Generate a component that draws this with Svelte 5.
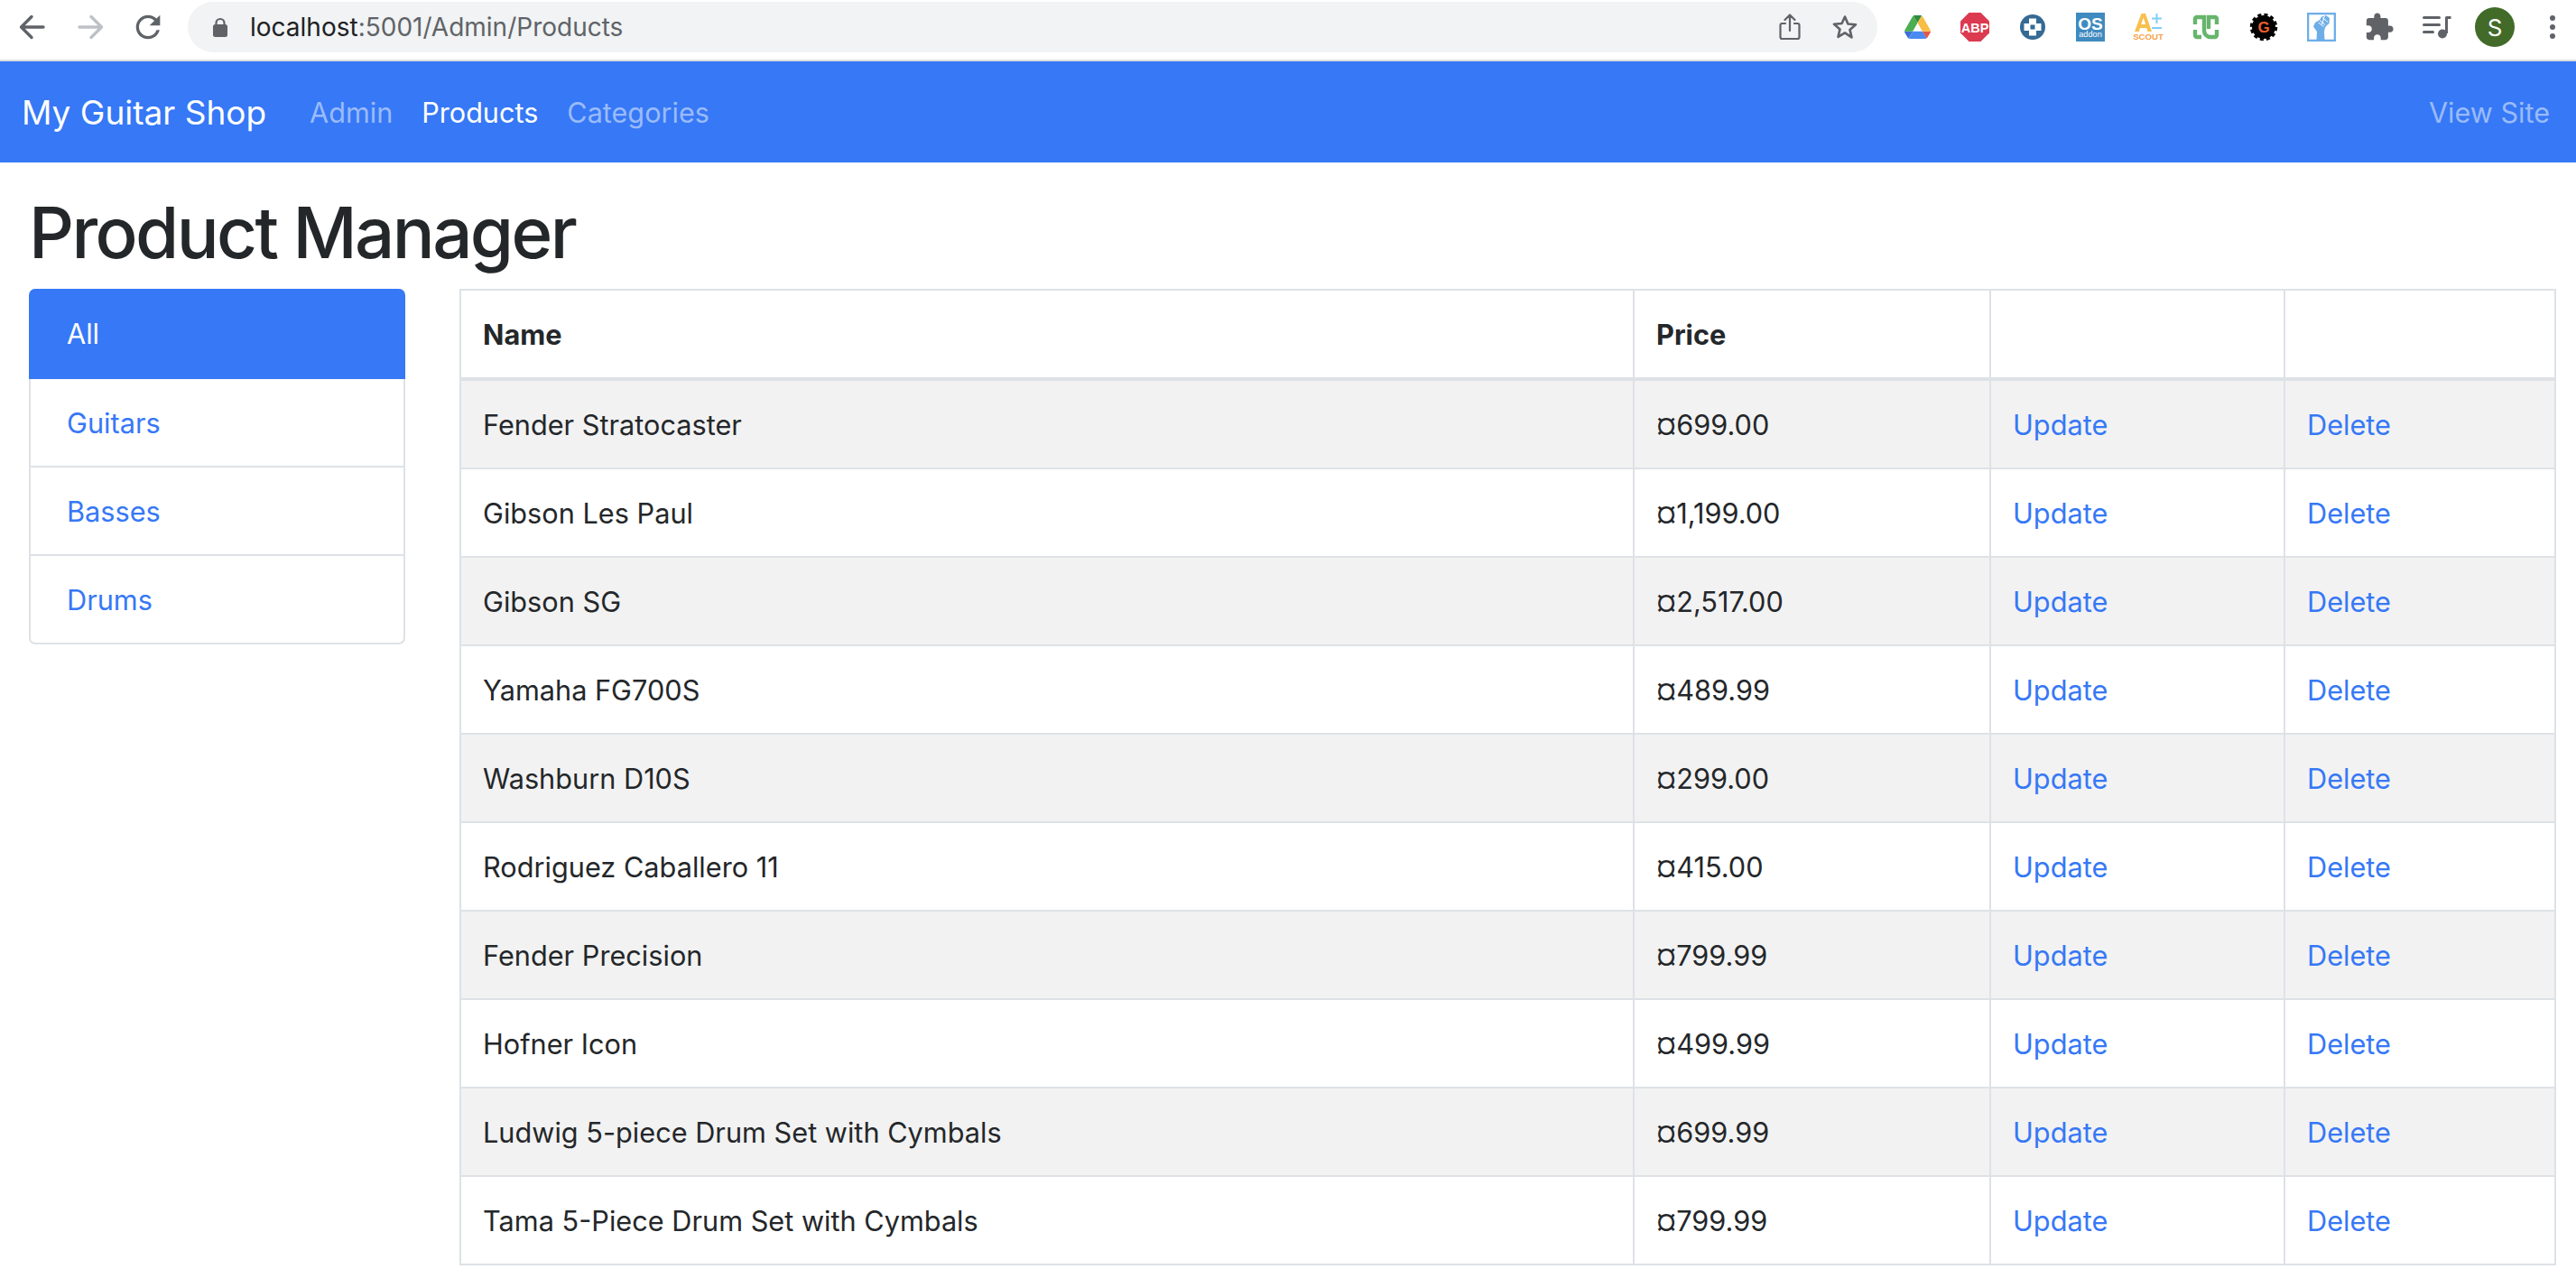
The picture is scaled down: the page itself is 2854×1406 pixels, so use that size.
<script>
  const products = [
    ["Fender Stratocaster", "¤699.00"],
    ["Gibson Les Paul", "¤1,199.00"],
    ["Gibson SG", "¤2,517.00"],
    ["Yamaha FG700S", "¤489.99"],
    ["Washburn D10S", "¤299.00"],
    ["Rodriguez Caballero 11", "¤415.00"],
    ["Fender Precision", "¤799.99"],
    ["Hofner Icon", "¤499.99"],
    ["Ludwig 5-piece Drum Set with Cymbals", "¤699.99"],
    ["Tama 5-Piece Drum Set with Cymbals", "¤799.99"],
  ];
  const categories = ["Guitars", "Basses", "Drums"];
</script>

<div class="page">
  <div class="chrome">
    <span class="slot">
      <svg width="32" height="30" viewBox="0 0 32 30" fill="none" stroke="#5f6368" stroke-width="3.4" stroke-linecap="round" stroke-linejoin="round"><path d="M4 15h24M15 3.500 3.500 15 15 26.500"/></svg>
    </span>
    <span class="slot">
      <svg width="32" height="30" viewBox="0 0 32 30" fill="none" stroke="#bdc1c6" stroke-width="3.4" stroke-linecap="round" stroke-linejoin="round"><path d="M4 15h24M17 3.500 28.500 15 17 26.500"/></svg>
    </span>
    <span class="slot">
      <svg width="40" height="40" viewBox="0 0 24 24" fill="#5f6368"><path d="M17.65 6.350A7.958 7.958 0 0 0 12 4c-4.420 0-7.990 3.580-7.990 8s3.570 8 7.990 8c3.730 0 6.840-2.550 7.730-6h-2.080A5.990 5.990 0 0 1 12 18c-3.310 0-6-2.690-6-6s2.690-6 6-6c1.660 0 3.140.690 4.220 1.780L13 11h7V4l-2.350 2.350z"/></svg>
    </span>

    <div class="omnibox">
      <svg class="lock" width="16" height="22" viewBox="0 0 16 22"><path d="M3.500 9V6.500a4.500 4.500 0 0 1 9 0V9" fill="none" stroke="#5f6368" stroke-width="2.200"/><rect y="8" width="16" height="14" rx="2.500" fill="#5f6368"/></svg>
      <span class="url"><b>localhost</b>:5001/Admin/Products</span>
      <svg class="share" width="24" height="30" viewBox="0 0 24 30" fill="none" stroke="#5f6368" stroke-width="2.200" stroke-linecap="round" stroke-linejoin="round"><path d="M7 11H3.500a2 2 0 0 0-2 2v13a2 2 0 0 0 2 2h17a2 2 0 0 0 2-2V13a2 2 0 0 0-2-2H17M12 19V2M6.500 7 12 1.500 17.500 7"/></svg>
      <svg class="star" width="30" height="30" viewBox="0 0 30 30" fill="none" stroke="#5f6368" stroke-width="2.600" stroke-linejoin="round"><path d="M15 3.500l3.400 8 8.600.7-6.500 5.700 2 8.500L15 21.400 7.500 25.900l2-8.500L3 11.700l8.600-.7z"/></svg>
    </div>

    <div class="extensions">
      <span class="slot">
        <svg width="29" height="26" viewBox="0 0 87.300 78">
          <path d="m6.600 66.850 3.850 6.650c.8 1.400 1.950 2.500 3.300 3.300l13.750-23.800h-27.500c0 1.550.4 3.100 1.200 4.500z" fill="#3b6fd8"/>
          <path d="m43.650 25-13.750-23.800c-1.350.8-2.500 1.900-3.300 3.300l-25.400 44a9.060 9.060 0 0 0 -1.200 4.500h27.500z" fill="#4cae50"/>
          <path d="m73.550 76.800c1.350-.8 2.500-1.900 3.300-3.300l1.600-2.750 7.650-13.250c.8-1.400 1.200-2.950 1.200-4.500h-27.502l5.852 11.500z" fill="#e2574a"/>
          <path d="m43.650 25 13.750-23.800c-1.350-.8-2.900-1.200-4.500-1.200h-18.500c-1.600 0-3.150.45-4.500 1.200z" fill="#2f8a3e"/>
          <path d="m59.800 53h-32.300l-13.750 23.800c1.350.8 2.900 1.200 4.500 1.200h50.800c1.600 0 3.150-.45 4.500-1.200z" fill="#4a8af0"/>
          <path d="m73.400 26.500-12.700-22c-.8-1.400-1.950-2.500-3.300-3.300l-13.750 23.800 16.150 28h27.450c0-1.550-.4-3.100-1.200-4.500z" fill="#f8bd45"/>
        </svg>
      </span>
      <span class="slot">
        <svg width="32" height="32" viewBox="0 0 32 32">
          <polygon points="9.500,0 22.500,0 32,9.500 32,22.500 22.500,32 9.500,32 0,22.500 0,9.500" fill="#dc3a50"/>
          <text x="16" y="21.500" text-anchor="middle" class="ico-text abp">ABP</text>
        </svg>
      </span>
      <span class="slot">
        <svg width="30" height="30" viewBox="0 0 30 30">
          <circle cx="15" cy="15" r="14" fill="#356a94"/>
          <path d="M11 5.500h8v5.500h5.500v8H19v5.500h-8V19H5.500v-8H11z" fill="#fff"/>
          <rect x="12.500" y="12.500" width="5" height="5" fill="#356a94"/>
        </svg>
      </span>
      <span class="slot">
        <svg width="32" height="32" viewBox="0 0 32 32">
          <rect width="32" height="32" fill="#3f8bbf"/>
          <text x="16" y="18.700" text-anchor="middle" class="ico-text os">OS</text>
          <text x="16" y="27" text-anchor="middle" class="ico-text addon">addon</text>
        </svg>
      </span>
      <span class="slot">
        <svg width="36" height="30" viewBox="0 0 36 30">
          <path d="M3 20 10.500 0h4.500L22 20h-4.500l-1.200-4H9l-1.200 4z M10.200 12h5l-2.500-7.500z" fill="#f8c04c" fill-rule="evenodd"/>
          <path d="M27.500 0v11M22 5.500h11M22 16h11" stroke="#7fd0f7" stroke-width="2" fill="none"/>
          <text x="18" y="28.500" text-anchor="middle" class="ico-text scout">SCOUT</text>
        </svg>
      </span>
      <span class="slot">
        <svg width="30" height="28" viewBox="0 0 30 28" fill="none" stroke="#66b56c" stroke-width="4.400">
          <path d="M3 11V5a2 2 0 0 1 2-2h8v15a7 7 0 0 0 7 7h5a2 2 0 0 0 2-2v-6"/>
          <path d="M27 11V5a2 2 0 0 0-2-2h-7v13"/>
          <path d="M3 17v6a2 2 0 0 0 2 2h5"/>
        </svg>
      </span>
      <span class="slot">
        <svg width="32" height="32" viewBox="0 0 32 32">
          <circle cx="16" cy="16" r="13" fill="#000"/>
          <circle cx="16" cy="16" r="13.500" fill="none" stroke="#000" stroke-width="3.500" stroke-dasharray="4 3.070"/>
          <text x="16" y="22" text-anchor="middle" class="ico-text gear">G</text>
        </svg>
      </span>
      <span class="slot">
        <svg width="32" height="32" viewBox="0 0 32 32">
          <rect x="1" y="1" width="30" height="30" fill="#fff" stroke="#6eaee8" stroke-width="2.600"/>
          <path d="M10.500 30 11 21 7 15.500 9 11l5-3 2-3.500 5-1.500 4 3-.5 6-2.500 2-2 2.500L19 21l.5 9z" fill="#6eaee8"/>
          <path d="M14 8.500l6 5M17 5.500l6 5M12.500 11l6 4.500M19.500 3.500 16.500 13" stroke="#fff" stroke-width="1" fill="none"/>
        </svg>
      </span>
      <span class="slot">
        <svg width="34" height="34" viewBox="0 0 24 24" fill="#5f6368"><path d="M20.500 11H19V7c0-1.100-.9-2-2-2h-4V3.500C13 2.120 11.880 1 10.500 1S8 2.120 8 3.500V5H4c-1.100 0-1.990.9-1.990 2v3.800H3.500c1.490 0 2.700 1.210 2.700 2.700s-1.210 2.700-2.700 2.700H2V20c0 1.100.9 2 2 2h3.800v-1.500c0-1.490 1.210-2.700 2.700-2.700 1.490 0 2.700 1.210 2.700 2.700V22H17c1.100 0 2-.9 2-2v-4h1.500c1.380 0 2.500-1.120 2.500-2.500S21.880 11 20.500 11z"/></svg>
      </span>
      <span class="slot">
        <svg width="32" height="26" viewBox="0 0 32 26" fill="#5f6368">
          <rect y="1" width="20" height="3" rx="1.500"/>
          <rect y="9" width="20" height="3" rx="1.500"/>
          <rect y="17" width="13" height="3" rx="1.500"/>
          <circle cx="22" cy="20.500" r="5"/>
          <path d="M25 20V2.500A1.500 1.500 0 0 1 26.500 1h5v3H28v16z"/>
        </svg>
      </span>
      <span class="slot">
        <span class="avatar">S</span>
      </span>
      <span class="slot last">
        <svg width="6" height="26" viewBox="0 0 6 26" fill="#5f6368"><circle cx="3" cy="3" r="3"/><circle cx="3" cy="13" r="3"/><circle cx="3" cy="23" r="3"/></svg>
      </span>
    </div>
  </div>

  <nav class="navbar">
    <a class="brand" href="#top">My Guitar Shop</a>
    <a class="nav-link" href="#top">Admin</a>
    <a class="nav-link active" href="#top">Products</a>
    <a class="nav-link" href="#top">Categories</a>
    <a class="nav-link site" href="#top">View Site</a>
  </nav>

  <main>
    <h1>Product Manager</h1>
    <div class="content">
      <aside class="list-group">
        <a class="list-item active" href="#top">All</a>
        {#each categories as name}
          <a class="list-item" href="#top">{name}</a>
        {/each}
      </aside>

      <table>
        <colgroup>
          <col class="c-name" /><col class="c-price" /><col class="c-update" /><col class="c-delete" />
        </colgroup>
        <thead>
          <tr><th>Name</th><th>Price</th><th></th><th></th></tr>
        </thead>
        <tbody>
          {#each products as [name, price]}
            <tr>
              <td>{name}</td>
              <td>{price}</td>
              <td><a href="#top">Update</a></td>
              <td><a href="#top">Delete</a></td>
            </tr>
          {/each}
        </tbody>
      </table>
    </div>
  </main>
</div>

<style>
  :global(body) { margin: 0; background: #fff; }
  .page {
    width: 2854px; height: 1406px; overflow: hidden;
    font-family: Inter, "Liberation Sans", sans-serif;
    color: #24272a;
  }
  a { text-decoration: none; }

  /* browser toolbar */
  .chrome {
    height: 60px; padding: 0 0 6px 4px;
    display: flex; align-items: center;
    border-bottom: 2px solid #dcdde0;
  }
  .slot {
    flex: none; width: 64px; height: 60px;
    display: flex; align-items: center; justify-content: center;
  }
  .slot.last { width: 58px; justify-content: flex-start; padding-left: 29px; box-sizing: border-box; }
  .omnibox {
    flex: none; width: 1872px; height: 56px; margin-left: 12px;
    box-sizing: border-box; padding: 0 21px 0 28px;
    display: flex; align-items: center;
    background: #f1f3f4; border-radius: 28px;
  }
  .url { margin-left: 25px; font-size: 28px; color: #5f6368; }
  .url b { font-weight: 400; color: #202124; }
  .share { margin-left: auto; }
  .star { margin-left: 34px; }
  .extensions { display: flex; align-items: center; margin-left: 12px; }
  .avatar {
    width: 44px; height: 44px; border-radius: 50%;
    background: #426b2a; color: #fff;
    display: flex; align-items: center; justify-content: center;
    font-size: 26px;
  }
  .ico-text { font-family: "Liberation Sans", sans-serif; font-weight: 700; }
  .abp { font-size: 14.5px; fill: #fff; }
  .os { font-size: 19px; fill: #fff; }
  .addon { font-size: 9.2px; font-weight: 400; fill: #fff; }
  .scout { font-size: 9.6px; fill: #f5a24b; }
  .gear { font-size: 17px; fill: #ee5f2c; }

  /* navbar */
  .navbar {
    height: 112px; padding: 0 29px 0 24px;
    display: flex; align-items: center;
    background: #3678f6;
  }
  .brand { font-size: 37px; color: #fff; margin-right: 32px; }
  .nav-link { font-size: 30.6px; padding: 0 16px; color: #9abbfa; }
  .nav-link.active { color: #fff; }
  .nav-link.site { margin-left: auto; padding: 0; }

  /* page body */
  main { padding: 0 22px 0 32px; }
  h1 {
    margin: 0; height: 140px; box-sizing: border-box; padding-top: 34px;
    font-size: 78px; font-weight: 500; line-height: 88px; letter-spacing: -2.6px;
  }
  .content { display: flex; align-items: flex-start; gap: 60px; }

  .list-group { width: 417px; flex: none; display: flex; flex-direction: column; }
  .list-item {
    height: 98px; box-sizing: border-box;
    display: flex; align-items: center; padding-left: 40px;
    font-size: 30.7px; color: #3678f6;
    border: 2px solid #dee2e6; border-top: 0;
  }
  .list-item.active {
    height: 100px; background: #3678f6; color: #fff;
    border-color: #3678f6; border-radius: 7px 7px 0 0;
  }
  .list-item:last-child { border-radius: 0 0 7px 7px; }

  table {
    width: 2323px; table-layout: fixed;
    border-collapse: separate; border-spacing: 0;
    font-size: 30.7px;
  }
  .c-name { width: 1302px; }
  .c-price { width: 395px; }
  .c-update { width: 326px; }
  .c-delete { width: 300px; }
  th, td {
    box-sizing: border-box; height: 98px; padding: 0 24px;
    text-align: left;
    border-right: 2px solid #dee2e6; border-bottom: 2px solid #dee2e6;
  }
  th { height: 102px; font-weight: 700; border-top: 2px solid #dee2e6; border-bottom-width: 4px; }
  th:first-child, td:first-child { border-left: 2px solid #dee2e6; }
  tbody tr:nth-child(odd) td { background: #f2f2f2; }
  td a { color: #3678f6; }
</style>
